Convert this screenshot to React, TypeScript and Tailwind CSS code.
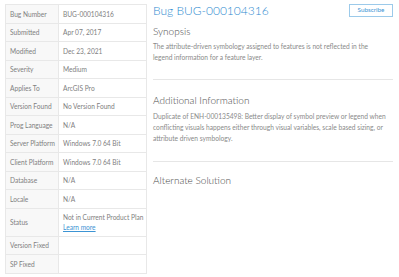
import React from "react";

const rows: { label: string; value: React.ReactNode; tall?: boolean }[] = [
  { label: "Bug Number", value: "BUG-000104316" },
  { label: "Submitted", value: "Apr 07, 2017" },
  { label: "Modified", value: "Dec 23, 2021" },
  { label: "Severity", value: "Medium" },
  { label: "Applies To", value: "ArcGIS Pro" },
  { label: "Version Found", value: "No Version Found" },
  { label: "Prog Language", value: "N/A" },
  { label: "Server Platform", value: "Windows 7.0 64 Bit" },
  { label: "Client Platform", value: "Windows 7.0 64 Bit" },
  { label: "Database", value: "N/A" },
  { label: "Locale", value: "N/A" },
  {
    label: "Status",
    tall: true,
    value: (
      <>
        <div>Not in Current Product Plan</div>
        <div>
          <a className="text-[#3c94d4] underline">Learn more</a>
        </div>
      </>
    ),
  },
  { label: "Version Fixed", value: "" },
  { label: "SP Fixed", value: "" },
];

export default function App() {
  return (
    <div
      className="flex items-start pt-[4px] pl-[5px] bg-white w-[399px] h-[277px] overflow-hidden"
      style={{ fontFamily: "Lato, 'Open Sans', sans-serif" }}
    >
      <div className="w-[142px] border border-[#e8e8e8] text-[6.6px] text-[#808080] font-normal">
        {rows.map((r, i) => (
          <div
            key={r.label}
            className={`grid grid-cols-[53px_1fr] ${i < rows.length - 1 ? "border-b border-[#e8e8e8]" : ""}`}
          >
            <div className="bg-[#f8f8f8] border-r border-[#e8e8e8] px-[4px] py-[3.5px] leading-[10.5px] flex items-center whitespace-nowrap overflow-hidden">
              {r.label}
            </div>
            <div
              className={`px-[4px] leading-[10.5px] whitespace-nowrap ${r.tall ? "py-[3px]" : "py-[3.5px] min-h-[17.5px]"}`}
            >
              {r.value}
            </div>
          </div>
        ))}
      </div>

      <div className="ml-[6px] w-[240px] flex flex-col">
        <div className="flex items-start justify-between">
          <h1 className="text-[12px] leading-[14.4px] text-[#2e8bd0] font-light">Bug BUG-000104316</h1>
          <button className="w-[44px] h-[13px] border border-[#9ccaea] text-[6.3px] leading-none text-[#3c94d4] flex items-center justify-center">
            Subscribe
          </button>
        </div>

        <h2 className="mt-[6.4px] text-[10px] leading-[12px] text-[#4a4a4a] font-light">Synopsis</h2>
        <p className="mt-[4.2px] text-[6.65px] leading-[11px] text-[#8a8a8a] font-normal whitespace-nowrap">
          The attribute-driven symbology assigned to features is not reflected in the
          <br />
          legend information for a feature layer.
        </p>

        <div className="mt-[16.5px] border-t border-[#e6e6e6]" />

        <h2 className="mt-[13.6px] text-[10px] leading-[12px] text-[#4a4a4a] font-light">Additional Information</h2>
        <p className="mt-[4.5px] text-[6.65px] leading-[11px] text-[#8a8a8a] font-normal whitespace-nowrap">
          Duplicate of ENH-000135498: Better display of symbol preview or legend when
          <br />
          conflicting visuals happens either through visual variables, scale based sizing, or
          <br />
          attribute driven symbology.
        </p>

        <div className="mt-[17.4px] border-t border-[#e6e6e6]" />

        <h2 className="mt-[12.4px] text-[10px] leading-[12px] text-[#4a4a4a] font-light">Alternate Solution</h2>
      </div>
    </div>
  );
}
